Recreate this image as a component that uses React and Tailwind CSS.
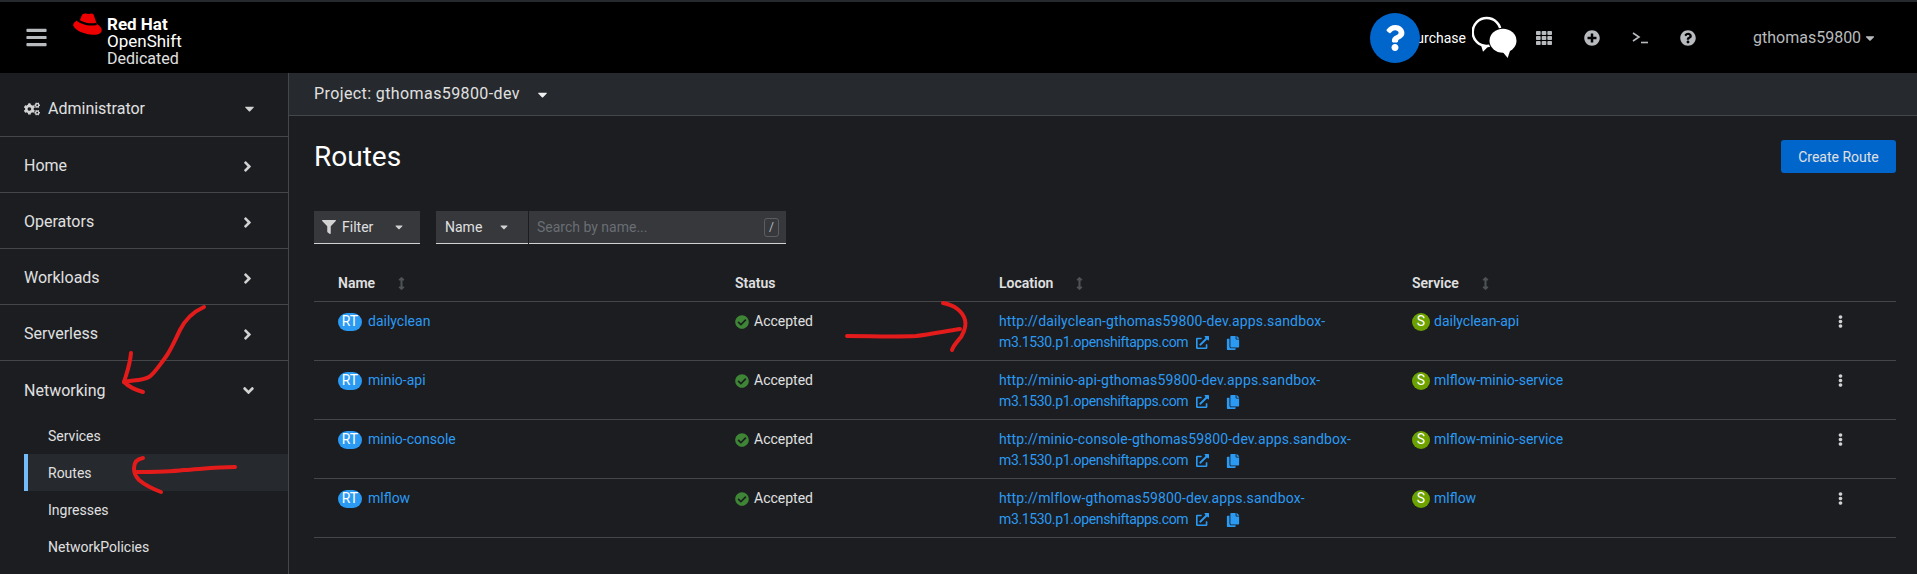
import {
  FaBars,
  FaCaretDown,
  FaAngleRight,
  FaAngleDown,
  FaCogs,
  FaFilter,
  FaTh,
  FaPlusCircle,
  FaQuestionCircle,
  FaQuestion,
  FaCheckCircle,
  FaExternalLinkAlt,
  FaCopy,
  FaEllipsisV,
  FaArrowsAltV,
} from 'react-icons/fa';

const routes = [
  { name: 'dailyclean', host: 'http://dailyclean-gthomas59800-dev.apps.sandbox-', service: 'dailyclean-api' },
  { name: 'minio-api', host: 'http://minio-api-gthomas59800-dev.apps.sandbox-', service: 'mlflow-minio-service' },
  { name: 'minio-console', host: 'http://minio-console-gthomas59800-dev.apps.sandbox-', service: 'mlflow-minio-service' },
  { name: 'mlflow', host: 'http://mlflow-gthomas59800-dev.apps.sandbox-', service: 'mlflow' },
];

const Logo = () => (
  <svg width="29" height="22" viewBox="0 0 87 65" className="shrink-0">
    <path
      d="M26 8C28 2 34 0 42 2C46 3 49 3 54 1C60 0 63 4 65 14L71 32C80 38 86 44 86 50C87 58 80 65 62 65C30 64 5 50 1 38C-1 32 4 26 12 22C16 24 19 24 20 22Z"
      fill="#ee0000"
    />
    <path d="M14 21C26 31 50 37 71 32" fill="none" stroke="#000" strokeWidth="7" />
  </svg>
);

const ChatBubbles = () => (
  <svg width="46" height="46" viewBox="0 0 46 46" className="shrink-0">
    <circle cx="14.7" cy="17" r="14" fill="none" stroke="#fff" strokeWidth="2.5" />
    <polygon points="8.7,29 17,30.7 11,36.7" fill="#fff" />
    <ellipse cx="31" cy="25.7" rx="14.5" ry="13" fill="#000" />
    <ellipse cx="31" cy="25.7" rx="13.5" ry="12" fill="#fff" />
    <polygon points="29.7,35.7 38,35.7 35.7,43" fill="#fff" />
  </svg>
);

const TerminalIcon = () => (
  <svg width="16" height="12" viewBox="0 0 16 12" fill="none" stroke="#b8bbbe" strokeWidth="1.6">
    <polyline points="1,1 7,5 1,9" />
    <line x1="9" y1="10.5" x2="16" y2="10.5" />
  </svg>
);

// Las flechas rojas dibujadas encima de la captura
const Annotations = () => (
  <svg className="absolute inset-0 pointer-events-none" width="1917" height="574" fill="none" stroke="#e31b1b" strokeWidth="4" strokeLinecap="round" strokeLinejoin="round">
    <path d="M204 307C195 311 186 318 180 330C175 340 171 350 165 358C159 366 154 374 149 377C142 381 132 380 124 382" />
    <path d="M131 353C130 365 127 372 124 382C129 387 136 390 143 392" />
    <path d="M235 467C218 467 200 469 184 470C168 472 152 472 137 472" />
    <path d="M143 458C137 459 134 463 134 468C134 472 136 477 139 480C145 485 153 489 161 492" />
    <path d="M847 336C870 336 895 337 916 336C932 334 946 331 960 329" />
    <path d="M943 303C955 305 963 312 965 320C967 328 963 333 961 337C957 342 953 346 952 350" />
  </svg>
);

const NavRow = ({ label }) => (
  <div className="flex items-center justify-between h-[56px] pt-[3px] pl-6 pr-[32px] border-b border-[#44464a] text-[#e0e0e0]">
    <span>{label}</span>
    <FaAngleRight className="text-[#d2d2d2] text-[17px]" />
  </div>
);

const SubItem = ({ label, active }) => (
  <div className={active ? 'flex items-center h-[37px] ml-6 pl-5 border-l-4 border-[#73bcf7] bg-[#26292d] text-[#e0e0e0] text-sm' : 'flex items-center h-[37px] pl-12 text-[#e0e0e0] text-sm'}>
    {label}
  </div>
);

const SortHead = ({ label, sort }) => (
  <div className="flex items-center gap-5 font-semibold text-[#e0e0e0]">
    <span>{label}</span>
    {sort && <FaArrowsAltV className="text-[#4f5255] text-[13px]" />}
  </div>
);

const App = () => {
  return (
    <div className="relative h-[574px] w-[1917px] overflow-hidden bg-[#1b1d21] [font-family:Roboto,sans-serif] text-white">
      <div className="h-[2px] bg-[#26292d]" />

      <header className="relative flex items-center h-[71px] bg-black">
        <FaBars className="ml-[25px] text-[#b8bbbe] text-[23px]" />
        <div className="flex items-start ml-[25px] mt-[4px] gap-[5px]">
          <Logo />
          <div className="leading-[17px] pt-[3px]">
            <div className="text-[17px] font-bold">Red Hat</div>
            <div className="text-[17px]">OpenShift</div>
            <div className="text-[16px] text-[#e0e0e0]">Dedicated</div>
          </div>
        </div>

        <div className="flex items-center ml-auto pr-10">
          <span className="text-sm mr-[6px]">Purchase</span>
          <ChatBubbles />
          <div className="flex items-center ml-[2px] text-[#b8bbbe]">
            <div className="flex justify-center w-12"><FaTh className="text-base" /></div>
            <div className="flex justify-center w-12"><FaPlusCircle className="text-base" /></div>
            <div className="flex justify-center w-12"><TerminalIcon /></div>
            <div className="flex justify-center w-12"><FaQuestionCircle className="text-base" /></div>
          </div>
          <div className="flex items-center justify-between w-[124px] ml-[41px] text-[#b8bbbe]">
            <span className="text-[16px]">gthomas59800</span>
            <FaCaretDown className="text-sm" />
          </div>
        </div>

        <div className="absolute left-[1370px] top-[11px] flex items-center justify-center w-[50px] h-[50px] rounded-full bg-[#06c]">
          <FaQuestion className="text-white text-[26px]" />
        </div>
      </header>

      <div className="flex h-[501px]">
        <aside className="w-[289px] shrink-0 border-r border-[#44464a] text-[16px]">
          <div className="flex items-center justify-between h-[64px] pt-2 pl-6 pr-[31px] border-b border-[#44464a] text-[#e0e0e0]">
            <div className="flex items-center gap-2">
              <FaCogs className="text-[#d2d2d2] text-[16px]" />
              <span>Administrator</span>
            </div>
            <FaCaretDown className="text-[#d2d2d2] text-[15px]" />
          </div>
          <NavRow label="Home" />
          <NavRow label="Operators" />
          <NavRow label="Workloads" />
          <NavRow label="Serverless" />
          <div className="flex items-center justify-between h-[56px] pt-[3px] pl-6 pr-[31px] text-[#e0e0e0]">
            <span>Networking</span>
            <FaAngleDown className="text-[#d2d2d2] text-[17px]" />
          </div>
          <SubItem label="Services" />
          <SubItem label="Routes" active />
          <SubItem label="Ingresses" />
          <SubItem label="NetworkPolicies" />
        </aside>

        <main className="flex-1 min-w-0">
          <div className="flex items-center h-[43px] pl-[25px] bg-[#26292d] border-b border-[#44464a] text-[16px] text-[#e0e0e0]">
            <span className="tracking-[0.4px]">Project: gthomas59800-dev</span>
            <FaCaretDown className="ml-[15px] text-[15px] text-[#f0f0f0]" />
          </div>

          <div className="pl-[25px] pr-[21px] pt-6">
            <div className="flex items-center justify-between h-[33px]">
              <h1 className="text-[28px] font-normal text-white">Routes</h1>
              <button className="h-[33px] w-[115px] rounded-[3px] bg-[#06c] text-sm text-[#e0e0e0]">Create Route</button>
            </div>

            <div className="flex items-stretch h-[33px] mt-[38px] text-sm text-[#e0e0e0]">
              <div className="flex items-center w-[106px] pl-2 bg-[#36383c] border-b border-[#d2d2d2]">
                <FaFilter className="text-[#d2d2d2] text-[14px]" />
                <span className="ml-[6px]">Filter</span>
                <FaCaretDown className="ml-[20px] text-[#d2d2d2] text-[12px]" />
              </div>
              <div className="flex items-center justify-between w-[92px] ml-4 pl-[9px] pr-[18px] bg-[#36383c] border-b border-[#d2d2d2]">
                <span>Name</span>
                <FaCaretDown className="text-[#d2d2d2] text-[12px]" />
              </div>
              <div className="flex items-center w-[257px] ml-px pl-2 pr-[7px] bg-[#36383c] border-b border-[#d2d2d2]">
                <input placeholder="Search by name..." className="flex-1 min-w-0 bg-transparent outline-none placeholder:text-[#6a6e73]" />
                <span className="flex items-center justify-center w-[15px] h-[19px] border border-[#5a5d61] rounded-[3px] text-xs text-[#b8bbbe]">/</span>
              </div>
            </div>

            <div className="grid grid-cols-[397px_264px_413px_422px_auto] items-end h-[58px] pl-6 pb-2 border-b border-[#44464a] text-sm">
              <SortHead label="Name" sort />
              <SortHead label="Status" />
              <SortHead label="Location" sort />
              <SortHead label="Service" sort />
            </div>

            {routes.map((route) => (
              <div key={route.name} className="grid grid-cols-[397px_264px_413px_422px_auto] items-start h-[59px] pl-6 pt-[9px] border-b border-[#44464a] text-sm leading-[21px]">
                <div className="flex items-center gap-[6px]">
                  <span className="flex items-center justify-center w-6 h-[18px] rounded-[9px] bg-[#2b9af3] text-white">RT</span>
                  <a className="text-[#2b9af3]">{route.name}</a>
                </div>
                <div className="flex items-center gap-[5px] text-[#e0e0e0]">
                  <FaCheckCircle className="text-[#3e8635] text-[14px]" />
                  <span>Accepted</span>
                </div>
                <div className="text-[#2b9af3]">
                  <div className="tracking-[0.15px]">{route.host}</div>
                  <div className="flex items-center">
                    <span className="tracking-[-0.35px]">m3.1530.p1.openshiftapps.com</span>
                    <FaExternalLinkAlt className="ml-2 text-[13px]" />
                    <FaCopy className="ml-[17px] text-[14px]" />
                  </div>
                </div>
                <div className="flex items-center gap-[4px]">
                  <span className="flex items-center justify-center w-[18px] h-[18px] rounded-full bg-[#6ca100] text-white">S</span>
                  <a className="text-[#2b9af3]">{route.service}</a>
                </div>
                <FaEllipsisV className="mt-1 text-[#d2d2d2] text-[13px]" />
              </div>
            ))}
          </div>
        </main>
      </div>

      <Annotations />
    </div>
  );
};

export default App;
